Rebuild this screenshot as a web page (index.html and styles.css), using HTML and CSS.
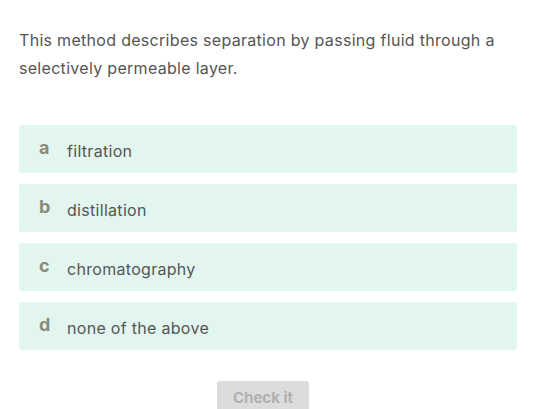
FILE: index.html
```html
<!DOCTYPE html>
<html>
<head>
<meta charset="utf-8">
<link rel="stylesheet" href="styles.css">
</head>
<body>
<div class="quiz">
  <p class="question">This method describes separation by passing fluid through a selectively permeable layer.</p>
  <div class="options">
    <div class="option"><span class="letter">a</span><span class="label">filtration</span></div>
    <div class="option"><span class="letter">b</span><span class="label">distillation</span></div>
    <div class="option"><span class="letter">c</span><span class="label">chromatography</span></div>
    <div class="option"><span class="letter">d</span><span class="label">none of the above</span></div>
  </div>
  <div class="actions"><button class="check">Check it</button></div>
</div>
</body>
</html>
```
FILE: styles.css
```css
html, body { margin: 0; padding: 0; background: #fff; }
body { font-family: "Inter", "Liberation Sans", sans-serif; color: #555; overflow: hidden; }
.quiz { padding: 26px 23px 0 19px; }
.question { margin: 0; font-size: 16px; line-height: 28px; color: #555; letter-spacing: 0.3px; }
.options { display: flex; flex-direction: column; gap: 11px; margin-top: 43px; }
.option { height: 48px; background: #e3f5ef; border-radius: 3px; display: flex; align-items: center; padding-left: 20px; }
.letter { width: 28px; font-weight: 700; font-size: 18px; color: #8b8b7b; margin-top: -4px; }
.label { font-size: 16px; color: #555; padding-top: 4px; letter-spacing: 0.3px; }
.actions { display: flex; justify-content: center; padding-right: 10px; margin-top: 31px; }
.check { width: 92px; height: 34px; border: 0; border-radius: 3px; background: #dcdcdc; color: #b0b0b0; font-family: inherit; font-weight: 700; font-size: 15px; padding: 0 0 2px; }
```
